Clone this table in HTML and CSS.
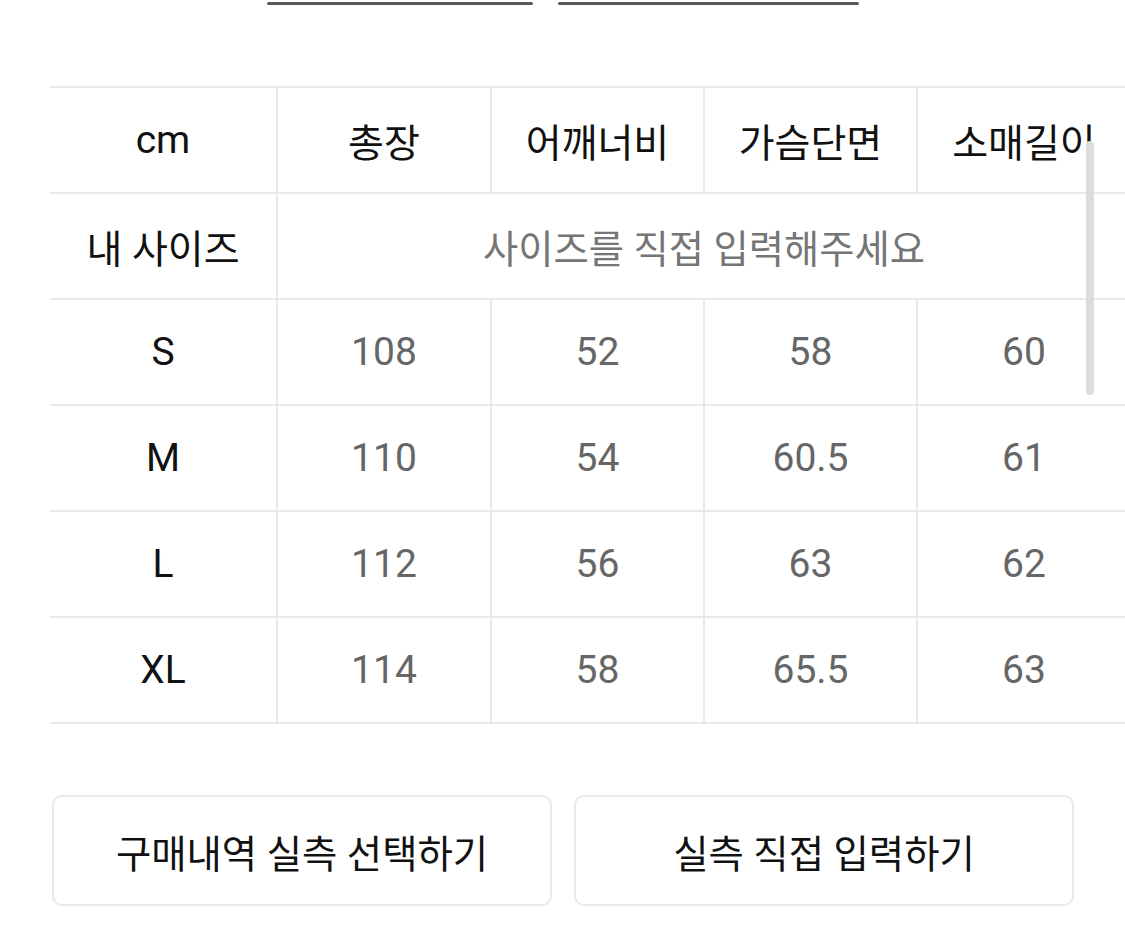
FILE: index.html
```html
<!DOCTYPE html>
<html lang="ko">
<head>
<meta charset="utf-8">
<link rel="stylesheet" href="styles.css">
</head>
<body>
<div class="tabs">
  <span class="tab-line tab-a"></span>
  <span class="tab-line tab-b"></span>
</div>
<div class="table-wrap">
  <table class="size-table">
    <colgroup>
      <col class="c0"><col class="c1"><col class="c2"><col class="c3"><col class="c4">
    </colgroup>
    <tr class="head">
      <td class="first">cm</td><td>총장</td><td>어깨너비</td><td>가슴단면</td><td>소매길이</td>
    </tr>
    <tr>
      <td class="first">내 사이즈</td><td colspan="4" class="hint">사이즈를 직접 입력해주세요</td>
    </tr>
    <tr>
      <td class="first">S</td><td class="val">108</td><td class="val">52</td><td class="val">58</td><td class="val">60</td>
    </tr>
    <tr>
      <td class="first">M</td><td class="val">110</td><td class="val">54</td><td class="val">60.5</td><td class="val">61</td>
    </tr>
    <tr>
      <td class="first">L</td><td class="val">112</td><td class="val">56</td><td class="val">63</td><td class="val">62</td>
    </tr>
    <tr>
      <td class="first">XL</td><td class="val">114</td><td class="val">58</td><td class="val">65.5</td><td class="val">63</td>
    </tr>
  </table>
  <div class="scrollbar"></div>
</div>
<div class="actions">
  <button class="btn">구매내역 실측 선택하기</button>
  <button class="btn">실측 직접 입력하기</button>
</div>
</body>
</html>
```
FILE: styles.css
```css
html, body {
  margin: 0;
  padding: 0;
  background: #fff;
  width: 1125px;
  height: 928px;
  overflow: hidden;
  font-family: Roboto, "Noto Sans CJK KR", sans-serif;
}
.tabs {
  display: flex;
  gap: 25px;
  padding-left: 267px;
  padding-top: 2px;
  height: 3px;
}
.tab-line {
  display: block;
  height: 3px;
  border-radius: 2px;
  background: #5a5a5a;
}
.tab-a { width: 266px; }
.tab-b { width: 301px; }

.table-wrap {
  position: relative;
  margin-top: 81px;
  margin-left: 50px;
  width: 1075px;
  overflow: hidden;
}
.size-table {
  border-collapse: collapse;
  table-layout: fixed;
  width: 1081px;
}
.c0 { width: 227px; }
.c1 { width: 214px; }
.c2 { width: 213px; }
.c3 { width: 213px; }
.c4 { width: 214px; }
.size-table td {
  border: 2px solid #e9e9e9;
  height: 104px;
  padding: 0;
  text-align: center;
  font-size: 39px;
  color: #111;
}
.size-table td.first { border-left: none; }
.size-table td.val { color: #666; }
.size-table td.hint { color: #757575; font-size: 38.3px; }
.scrollbar {
  position: absolute;
  left: 1036px;
  top: 55px;
  width: 8px;
  height: 254px;
  border-radius: 4px;
  background: #dcdcdc;
}
.actions {
  display: flex;
  gap: 22px;
  margin-top: 71px;
  margin-left: 52px;
}
.btn {
  width: 500px;
  height: 111px;
  border: 2px solid #e9e9e9;
  border-radius: 10px;
  background: #fff;
  font-family: Roboto, "Noto Sans CJK KR", sans-serif;
  font-size: 38.4px;
  color: #111;
  padding: 0;
}
```
